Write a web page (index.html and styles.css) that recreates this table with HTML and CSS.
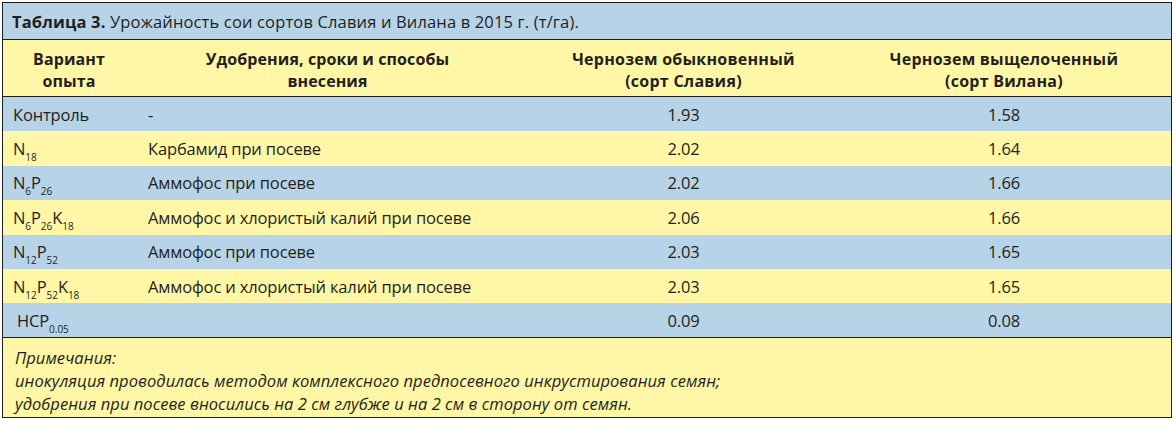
FILE: index.html
```html
<!DOCTYPE html>
<html lang="ru">
<head>
<meta charset="utf-8">
<link rel="stylesheet" href="styles.css">
</head>
<body>
<div class="table">
  <div class="title"><b>Таблица 3.</b> Урожайность сои сортов Славия и Вилана в 2015 г. (т/га).</div>
  <div class="grid head">
    <div class="c1">Вариант<br>опыта</div>
    <div class="c2">Удобрения, сроки и способы<br>внесения</div>
    <div class="c3 cond">Чернозем обыкновенный<br>(сорт Славия)</div>
    <div class="c4 cond">Чернозем выщелоченный<br>(сорт Вилана)</div>
  </div>
  <div class="grid row blue">
    <div class="c1">Контроль</div><div class="c2">-</div><div class="c3">1.93</div><div class="c4">1.58</div>
  </div>
  <div class="grid row yellow">
    <div class="c1">N<sub>18</sub></div><div class="c2">Карбамид при посеве</div><div class="c3">2.02</div><div class="c4">1.64</div>
  </div>
  <div class="grid row blue">
    <div class="c1">N<sub>6</sub>P<sub>26</sub></div><div class="c2">Аммофос при посеве</div><div class="c3">2.02</div><div class="c4">1.66</div>
  </div>
  <div class="grid row yellow">
    <div class="c1">N<sub>6</sub>P<sub>26</sub>K<sub>18</sub></div><div class="c2">Аммофос и хлористый калий при посеве</div><div class="c3">2.06</div><div class="c4">1.66</div>
  </div>
  <div class="grid row blue">
    <div class="c1">N<sub>12</sub>P<sub>52</sub></div><div class="c2">Аммофос при посеве</div><div class="c3">2.03</div><div class="c4">1.65</div>
  </div>
  <div class="grid row yellow">
    <div class="c1">N<sub>12</sub>P<sub>52</sub>K<sub>18</sub></div><div class="c2">Аммофос и хлористый калий при посеве</div><div class="c3">2.03</div><div class="c4">1.65</div>
  </div>
  <div class="grid row blue last">
    <div class="c1 hcp">НСР<sub>0.05</sub></div><div class="c2"></div><div class="c3">0.09</div><div class="c4">0.08</div>
  </div>
  <div class="notes">
    <div>Примечания:</div>
    <div>инокуляция проводилась методом комплексного предпосевного инкрустирования семян;</div>
    <div>удобрения при посеве вносились на 2 см глубже и на 2 см в сторону от семян.</div>
  </div>
</div>
</body>
</html>
```

FILE: styles.css
```css
html, body {
  margin: 0;
  padding: 0;
  background: #ffffff;
}
body {
  font-family: "Open Sans", "Noto Sans", sans-serif;
  color: #231f20;
}
.table {
  margin: 2px 0 0 2px;
  width: 1170px;
  height: 416px;
  box-sizing: border-box;
  border: 1.5px solid #1e1e1e;
  display: flex;
  flex-direction: column;
  background: #fff7a6;
}
.title {
  height: 37px;
  box-sizing: border-box;
  border-bottom: 1.5px solid #1e1e1e;
  background: #b7d3e7;
  padding: 7px 0 0 9px;
  font-size: 16.5px;
  letter-spacing: 0.15px;
}
.title b {
  font-weight: 700;
}
.grid {
  display: grid;
  grid-template-columns: 132px 385px 327px 1fr;
  align-items: center;
}
.head {
  height: 57px;
  box-sizing: border-box;
  border-bottom: 1.5px solid #1e1e1e;
  background: #fff7a6;
  font-weight: 700;
  font-size: 16px;
  line-height: 22px;
  letter-spacing: 0.1px;
  text-align: center;
  padding-top: 3px;
}
.head .cond {
  letter-spacing: 0.25px;
}
.head .c4 {
  padding-right: 10px;
}
.row {
  height: 34.4px;
  font-size: 16.5px;
  letter-spacing: -0.15px;
}
.row .c1 {
  padding-left: 10px;
}
.row .c2 {
  padding-left: 13px;
}
.row .c3 {
  text-align: center;
}
.row .c4 {
  text-align: center;
  padding-right: 10px;
}
.row .hcp {
  padding-left: 14px;
}
.blue {
  background: #b7d3e7;
}
.yellow {
  background: #fff7a6;
}
.last {
  box-sizing: border-box;
  border-bottom: 1.5px solid #1e1e1e;
}
sub {
  font-size: 10px;
  vertical-align: -6px;
  line-height: 0;
  letter-spacing: 0;
}
.notes {
  flex: 1;
  background: #fff7a6;
  font-style: italic;
  font-size: 16.5px;
  line-height: 23px;
  padding: 8px 0 0 12px;
  letter-spacing: 0.05px;
}
```
